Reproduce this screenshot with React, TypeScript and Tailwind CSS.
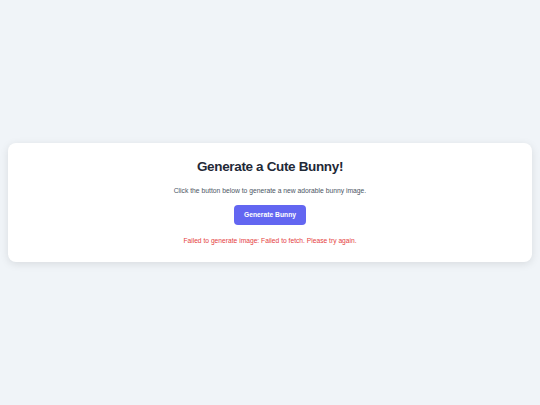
import React from "react";

export default function App() {
  return (
    <div
      className="min-h-screen bg-[#f0f4f8] flex items-center justify-center px-2"
      style={{ fontFamily: '"Liberation Sans", Arial, sans-serif' }}
    >
      <div className="w-full bg-white rounded-lg shadow-[0_2px_8px_rgba(0,0,0,0.1)] px-4 pt-[15px] pb-[16px] flex flex-col items-center text-center">
        <h1 className="text-[13.5px] leading-[18px] tracking-[-0.35px] font-bold text-[#1f2937]">
          Generate a Cute Bunny!
        </h1>
        <p className="mt-[10px] text-[6.75px] leading-[10px] text-[#4b5563]">
          Click the button below to generate a new adorable bunny image.
        </p>
        <button className="mt-[9px] w-[72px] h-[20px] rounded-[4px] bg-[#6366f1] text-white text-[6.75px] font-bold">
          Generate Bunny
        </button>
        <p className="mt-[11px] text-[6.7px] leading-[10px] text-[#e53e3e]">
          Failed to generate image: Failed to fetch. Please try again.
        </p>
      </div>
    </div>
  );
}
